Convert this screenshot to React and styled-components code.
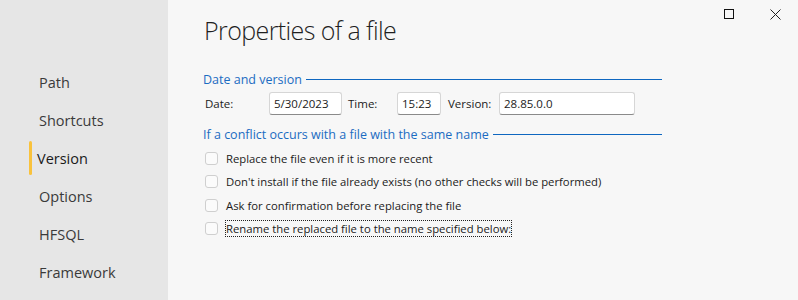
import React from "react";
import styled, { createGlobalStyle } from "styled-components";

const GlobalStyle = createGlobalStyle`
  html, body {
    margin: 0;
    padding: 0;
    background: #f7f7f7;
  }
  body {
    font-family: "Open Sans", "Noto Sans", sans-serif;
    color: #1b1b1b;
  }
`;

const navItems = ["Path", "Shortcuts", "Version", "Options", "HFSQL", "Framework"];

const checks = [
  "Replace the file even if it is more recent",
  "Don't install if the file already exists (no other checks will be performed)",
  "Ask for confirmation before replacing the file",
  "Rename the replaced file to the name specified below:",
];

export default function App() {
  return (
    <>
      <GlobalStyle />
      <Window>
        <Sidebar>
          {navItems.map((item) => (
            <NavItem key={item} $active={item === "Version"}>
              {item}
            </NavItem>
          ))}
        </Sidebar>
        <Main>
          <Title>Properties of a file</Title>
          <Section>
            <SectionHeader>
              <span>Date and version</span>
              <Rule />
            </SectionHeader>
            <FieldRow>
              <Label $width={64}>Date:</Label>
              <Input $width={73} defaultValue="5/30/2023" />
              <Label $width={49} $gap={6}>Time:</Label>
              <Input $width={44} defaultValue="15:23" />
              <Label $width={51} $gap={7}>Version:</Label>
              <Input $width={136} defaultValue="28.85.0.0" />
            </FieldRow>
          </Section>
          <Section>
            <SectionHeader>
              <span>If a conflict occurs with a file with the same name</span>
              <Rule />
            </SectionHeader>
            <CheckList>
              {checks.map((text, i) => (
                <CheckRow key={text}>
                  <Box />
                  <CheckText $focused={i === 3}>{text}</CheckText>
                </CheckRow>
              ))}
            </CheckList>
          </Section>
        </Main>
        <Controls>
          <CtrlButton aria-label="Maximize">
            <svg width="10" height="10" viewBox="0 0 10 10">
              <rect x="0.5" y="0.5" width="9" height="9" fill="none" stroke="#111" strokeWidth="1" />
            </svg>
          </CtrlButton>
          <CtrlButton aria-label="Close">
            <svg width="11" height="11" viewBox="0 0 11 11">
              <path d="M0.5 0.5L10.5 10.5M10.5 0.5L0.5 10.5" stroke="#222" strokeWidth="1" />
            </svg>
          </CtrlButton>
        </Controls>
      </Window>
    </>
  );
}

const Window = styled.div`
  position: relative;
  display: flex;
  width: 798px;
  height: 300px;
  overflow: hidden;
  background: #f7f7f7;
`;

const Sidebar = styled.nav`
  width: 168px;
  flex-shrink: 0;
  background: #e6e6e6;
  padding-top: 63px;
  box-sizing: border-box;
  display: flex;
  flex-direction: column;
`;

const NavItem = styled.div`
  position: relative;
  height: 38px;
  display: flex;
  align-items: center;
  padding-left: ${(p) => (p.$active ? "37px" : "39px")};
  font-size: 14.5px;
  color: ${(p) => (p.$active ? "#1a1a1a" : "#3a3a3a")};
  font-weight: ${(p) => (p.$active ? 500 : 400)};

  &::before {
    content: "";
    display: ${(p) => (p.$active ? "block" : "none")};
    position: absolute;
    left: 29px;
    top: 2px;
    width: 3px;
    height: 34px;
    border-radius: 2px;
    background: #f9c23c;
  }
`;

const Main = styled.main`
  flex: 1;
  padding: 12px 0 0 35px;
  display: flex;
  flex-direction: column;
`;

const Title = styled.h1`
  margin: 0 0 22px 1px;
  font-size: 25px;
  letter-spacing: -0.6px;
  font-weight: 300;
  line-height: 36px;
  color: #1f1f1f;
`;

const Section = styled.section`
  width: 459px;
  display: flex;
  flex-direction: column;
`;

const SectionHeader = styled.div`
  display: flex;
  align-items: center;
  gap: 4px;
  height: 18px;
  font-size: 12.5px;
  color: #1c6cc2;
  white-space: nowrap;
`;

const Rule = styled.div`
  flex: 1;
  height: 1px;
  background: #0f67c0;
  margin-top: 1px;
`;

const FieldRow = styled.div`
  display: flex;
  align-items: center;
  height: 24px;
  margin: 3px 0 10px 2px;
`;

const Label = styled.span`
  width: ${(p) => p.$width}px;
  margin-left: ${(p) => p.$gap || 0}px;
  font-size: 11.5px;
  color: #1b1b1b;
`;

const Input = styled.input`
  width: ${(p) => p.$width}px;
  height: 23px;
  box-sizing: border-box;
  padding: 0 4px;
  border: 1px solid #d6d6d6;
  border-bottom-color: #8a8a8a;
  border-radius: 3px;
  background: #fff;
  font-family: inherit;
  font-size: 11.5px;
  color: #1b1b1b;
  outline: none;
`;

const CheckList = styled.div`
  display: flex;
  flex-direction: column;
  margin-top: 4px;
`;

const CheckRow = styled.label`
  display: flex;
  align-items: center;
  height: 23.3px;
  padding-left: 2px;
`;

const Box = styled.span`
  width: 13px;
  height: 13px;
  box-sizing: border-box;
  border: 1px solid #cfcfcf;
  border-radius: 3px;
  background: #fbfbfb;
  margin-right: 8px;
`;

const CheckText = styled.span`
  font-size: 11.3px;
  color: #1b1b1b;
  line-height: 15px;
  outline: ${(p) => (p.$focused ? "1px dotted #222" : "none")};
`;

const Controls = styled.div`
  position: absolute;
  top: 0;
  right: 0;
  display: flex;
`;

const CtrlButton = styled.div`
  width: 46px;
  height: 28px;
  display: flex;
  align-items: center;
  justify-content: center;
`;
